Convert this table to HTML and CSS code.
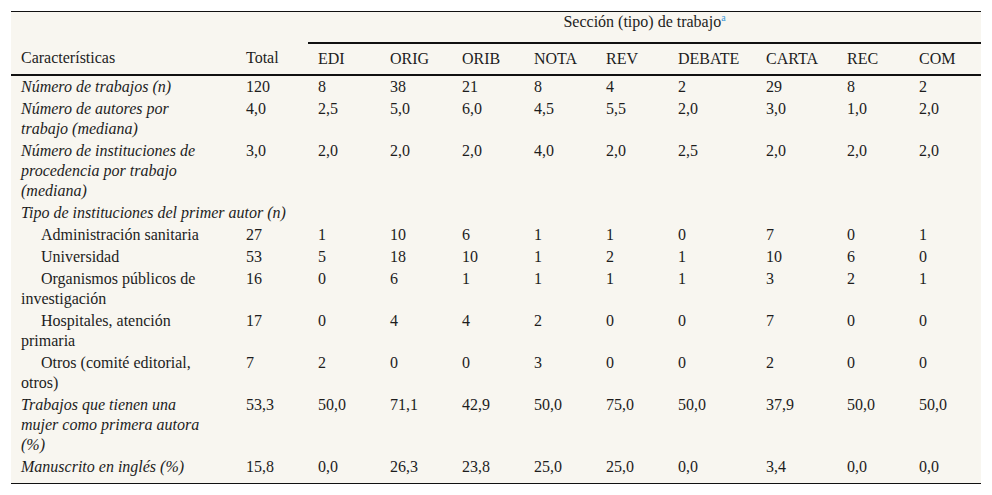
FILE: index.html
```html
<!DOCTYPE html>
<html lang="es">
<head>
<meta charset="utf-8">
<link rel="stylesheet" href="styles.css">
</head>
<body>
<table class="tbl">
  <colgroup>
    <col class="c-char"><col class="c-n"><col class="c-n"><col class="c-n"><col class="c-n"><col class="c-n"><col class="c-n"><col class="c-deb"><col class="c-car"><col class="c-n"><col class="c-n">
  </colgroup>
  <thead>
    <tr class="h1">
      <th></th><th></th>
      <th colspan="9" class="group">Sección (tipo) de trabajo<sup class="ref">a</sup></th>
    </tr>
    <tr class="h2">
      <th>Características</th><th>Total</th><th>EDI</th><th>ORIG</th><th>ORIB</th><th>NOTA</th><th>REV</th><th>DEBATE</th><th>CARTA</th><th>REC</th><th>COM</th>
    </tr>
  </thead>
  <tbody>
    <tr><td class="it">Número de trabajos (n)</td><td>120</td><td>8</td><td>38</td><td>21</td><td>8</td><td>4</td><td>2</td><td>29</td><td>8</td><td>2</td></tr>
    <tr><td class="it">Número de autores por trabajo (mediana)</td><td>4,0</td><td>2,5</td><td>5,0</td><td>6,0</td><td>4,5</td><td>5,5</td><td>2,0</td><td>3,0</td><td>1,0</td><td>2,0</td></tr>
    <tr><td class="it">Número de instituciones de procedencia por trabajo (mediana)</td><td>3,0</td><td>2,0</td><td>2,0</td><td>2,0</td><td>4,0</td><td>2,0</td><td>2,5</td><td>2,0</td><td>2,0</td><td>2,0</td></tr>
    <tr><td class="it" colspan="11">Tipo de instituciones del primer autor (n)</td></tr>
    <tr><td class="ind">Administración sanitaria</td><td>27</td><td>1</td><td>10</td><td>6</td><td>1</td><td>1</td><td>0</td><td>7</td><td>0</td><td>1</td></tr>
    <tr><td class="ind">Universidad</td><td>53</td><td>5</td><td>18</td><td>10</td><td>1</td><td>2</td><td>1</td><td>10</td><td>6</td><td>0</td></tr>
    <tr><td class="ind">Organismos públicos de investigación</td><td>16</td><td>0</td><td>6</td><td>1</td><td>1</td><td>1</td><td>1</td><td>3</td><td>2</td><td>1</td></tr>
    <tr><td class="ind">Hospitales, atención primaria</td><td>17</td><td>0</td><td>4</td><td>4</td><td>2</td><td>0</td><td>0</td><td>7</td><td>0</td><td>0</td></tr>
    <tr><td class="ind">Otros (comité editorial, otros)</td><td>7</td><td>2</td><td>0</td><td>0</td><td>3</td><td>0</td><td>0</td><td>2</td><td>0</td><td>0</td></tr>
    <tr><td class="it">Trabajos que tienen una mujer como primera autora (%)</td><td>53,3</td><td>50,0</td><td>71,1</td><td>42,9</td><td>50,0</td><td>75,0</td><td>50,0</td><td>37,9</td><td>50,0</td><td>50,0</td></tr>
    <tr class="last"><td class="it">Manuscrito en inglés (%)</td><td>15,8</td><td>0,0</td><td>26,3</td><td>23,8</td><td>25,0</td><td>25,0</td><td>0,0</td><td>3,4</td><td>0,0</td><td>0,0</td></tr>
  </tbody>
</table>
</body>
</html>
```

FILE: styles.css
```css
html, body {
  margin: 0;
  padding: 0;
  background: #ffffff;
}
body {
  padding: 11px 11px 0 11px;
  font-family: "Liberation Serif", "Times New Roman", Times, serif;
  font-size: 16px;
  color: #1d1d1d;
}
.tbl {
  width: 970px;
  border-collapse: collapse;
  table-layout: fixed;
  background: #f8f6f0;
  border-top: 1px solid #111;
  border-bottom: 1px solid #111;
  line-height: 20px;
  font-family: "Liberation Serif", "Times New Roman", Times, serif;
}
.c-char { width: 225px; }
.c-n { width: 72px; }
.c-deb { width: 88px; }
.c-car { width: 81px; }
th, td {
  font-family: "Liberation Serif", "Times New Roman", Times, serif;
  font-size: 16px;
  text-align: left;
  font-weight: normal;
  vertical-align: top;
  padding: 1px 10px;
}
td:first-child {
  padding-right: 24px;
}
.h1 th {
  padding: 0 10px 10px 10px;
}
.h1 .group {
  text-align: center;
  border-bottom: 2px solid #111;
}
.h2 th {
  padding: 5px 10px 5px 10px;
  border-bottom: 2px solid #111;
}
.ref {
  color: #3c9ad8;
  font-size: 10px;
  line-height: 0;
  vertical-align: 6px;
}
.it {
  font-style: italic;
}
.ind {
  text-indent: 20px;
}
.last td {
  padding-bottom: 6px;
}
```
